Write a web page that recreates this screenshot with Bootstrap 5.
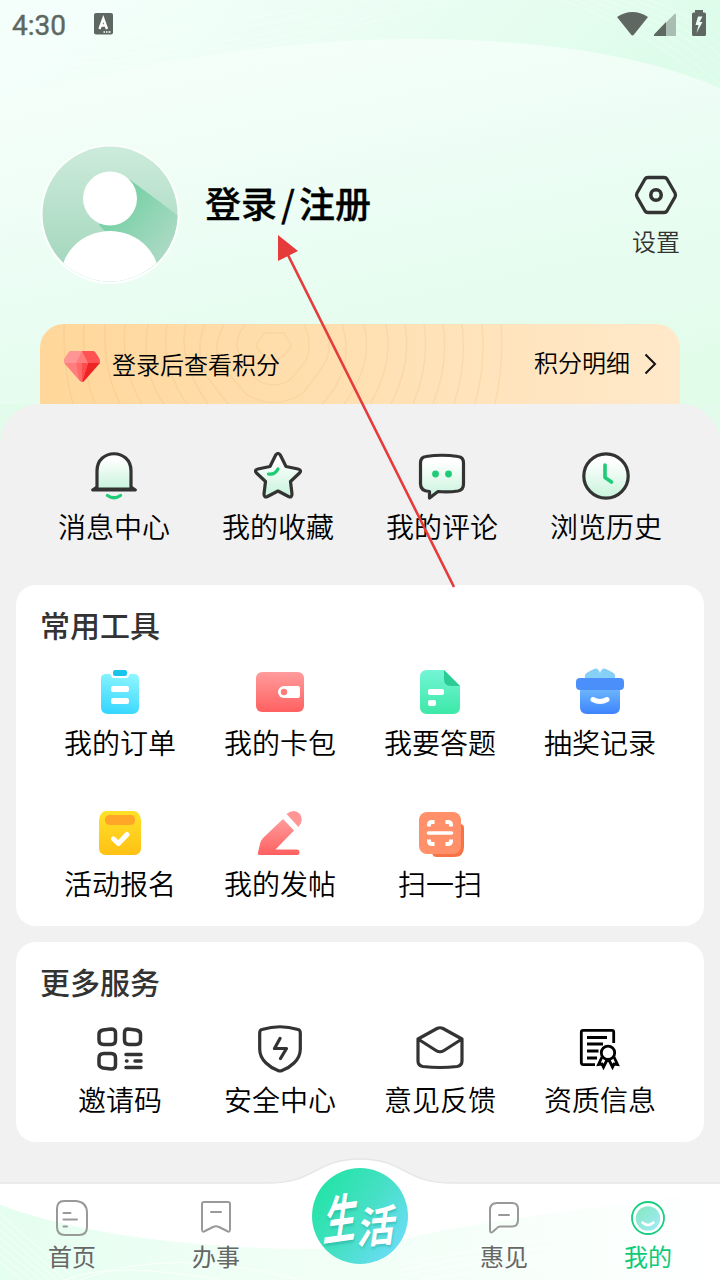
<!DOCTYPE html>
<html lang="zh-CN">
<head>
<meta charset="utf-8">
<meta name="viewport" content="width=device-width, initial-scale=1">
<title>我的</title>
<link href="https://cdn.jsdelivr.net/npm/bootstrap@5.3.0/dist/css/bootstrap.min.css" rel="stylesheet">
<style>
body{font-family:"Noto Sans CJK SC",sans-serif;font-weight:350;color:#000;background:#f1f1f1;overflow:hidden}
.screen{width:720px;height:1280px;overflow:hidden}
.screen svg{display:block;flex:none}
.hero{height:404px;background:#e2fbea}
.hero-art{left:0;top:0;z-index:0}
.status{height:48px;padding:0 12px;font-family:Roboto,sans-serif;font-weight:500;font-size:28px;color:#5e6762}
.status span{font-weight:400;-webkit-text-stroke:.4px #5e6762}
.profile{height:276px;padding:95px 36px 0 39px}
.login{font-size:36px;font-weight:500;line-height:54px;margin:32px 0 0 24px;-webkit-text-stroke:.3px #000}
.login i{font-style:normal;margin:0 4px}
.setting-link{padding-top:30px}
.setting{font-size:24px;line-height:34px;color:#333;margin-top:7px}
.points{height:80px;margin:0 40px;padding:0 20px 0 24px;border-radius:24px 24px 0 0;background:linear-gradient(90deg,#ffd79b,#ffe9ca);font-size:24px;overflow:hidden}
.points .hint{padding-bottom:1px}
.points .detail{padding-bottom:4px}
.rings{left:0;top:0}
.sheet{height:876px;border-radius:40px 40px 0 0;background:#f1f1f1;padding-top:48px}
.under{background:#e2fbea}
.tile{font-size:28px;line-height:42px;gap:5px;padding-bottom:1px}
.shortcuts{padding:0 32px;height:133px}
.panel{margin:0 16px 16px;padding:19px 24px 21px;border-radius:20px;background:#fff}
.panel h2{font-size:30px;font-weight:500;line-height:40px;color:#333;margin:0 0 24px}
.tiles{row-gap:45px}
.tabs{left:0;bottom:0;width:720px;height:124px}
.tabs-bg{left:0;top:0}
.tab{width:144px;font-size:24px;line-height:34px;font-weight:400;color:#666;padding-top:42px;gap:1px}
.tab.on{color:#0fc977}
.life{width:96px;height:96px;margin:12px 24px 0;border-radius:50%;background:linear-gradient(125deg,#20e4a4 8%,#45e0c4 50%,#72dcff 95%);color:#fff;font-weight:500;line-height:1;text-shadow:1px 2px 2px #1a9b9060}
.life b{font-size:38px;font-weight:700;display:block;transform:skew(-8deg,-8deg) scale(.86,1.4)}
.life b+b{font-size:38px;margin:16px 0 0 -3px;transform:skew(-8deg,-5deg) scale(.98,1.15)}
.pointer{left:0;top:0;pointer-events:none}
</style>
</head>
<body>
<div class="screen position-relative">
  <header class="hero position-relative">
    <svg class="hero-art position-absolute" width="720" height="404" viewBox="0 0 720 404">
      <defs>
        <linearGradient id="sky" x1="0" y1="0" x2="1" y2=".25"><stop offset=".1" stop-color="#f4fffb"/><stop offset=".55" stop-color="#eafdf3"/><stop offset="1" stop-color="#ddfce9"/></linearGradient>
        <linearGradient id="hill" x1=".25" y1="0" x2=".65" y2="1"><stop offset="0" stop-color="#f6fffa"/><stop offset=".5" stop-color="#ebfdf4"/><stop offset="1" stop-color="#e2fcea"/></linearGradient>
      </defs>
      <path d="M0 0H720V150H0Z" fill="url(#sky)"/>
      <g fill="none" stroke="#fff" stroke-opacity=".35" stroke-width="1"><path d="M560 0Q650 30 720 95M575 0Q660 30 720 85M590 0Q670 28 720 75M605 0Q680 27 720 65M620 0Q685 24 720 55M635 0Q690 20 720 45M650 0Q695 18 720 35M0 60Q200 60 400 0M0 68Q210 64 430 0M0 76Q230 68 450 0M0 50Q180 50 370 0M0 40Q180 38 340 0"/></g>
      <path d="M0 98Q250 37 420 39Q610 40 720 88V404H0Z" fill="url(#hill)"/>
    </svg>
    <div class="status position-relative d-flex align-items-center">
      <span class="pt-1">4:30</span>
      <svg class="ms-4" width="24" height="24" viewBox="90 12 24 24"><rect x="94" y="13" width="19" height="21.500" rx="2" fill="#5e6762"/><path d="M99.500 29L103.300 18.500L107 29M101 25.500H105.500" fill="none" stroke="#fff" stroke-width="2.400"/><path d="M103.500 32h1.500m1 0h1.500m1 0h2" stroke="#fff" stroke-width="1.600"/></svg>
      <svg class="ms-auto" width="96" height="32" viewBox="612 8 96 32" fill="#5e6762"><path d="M617 17Q632.500 7 648 17L634 34.500Q632.500 36.500 631 34.500Z"/><path d="M666 22V36H655Q653 36 654.500 34Z"/><path d="M666 22.500L674 14.500Q676 13 676 15V36H666Z" opacity=".42"/><path d="M693.500 12.500H695V10H703V12.500H704.500Q706 12.500 706 14V34.500Q706 36 704.500 36H693.500Q692 36 692 34.500V14Q692 12.500 693.500 12.500Z"/><path d="M698 16.500L695.500 25H698.500L696.500 33L702.500 22H699.500L702.500 16.500Z" fill="#ecfff4"/></svg>
    </div>
    <div class="profile position-relative d-flex align-items-start">
      <svg width="142" height="142" viewBox="39 143 142 142">
        <defs>
          <linearGradient id="av" x1="0" y1="0" x2="0" y2="1"><stop stop-color="#cfecdc"/><stop offset="1" stop-color="#9ed4b9"/></linearGradient>
          <linearGradient id="shade" gradientUnits="userSpaceOnUse" x1="125" y1="200" x2="172" y2="240"><stop stop-color="#79d1a7"/><stop offset="1" stop-color="#a9d9c2"/></linearGradient>
          <clipPath id="face"><circle cx="110" cy="214" r="67.500"/></clipPath>
        </defs>
        <circle cx="110" cy="214.500" r="69.500" fill="#fff" opacity=".85"/>
        <g clip-path="url(#face)"><path d="M40 140H180V285H40Z" fill="url(#av)"/><path d="M129 179L180 217V285H155L99 225Z" fill="url(#shade)"/><ellipse cx="110" cy="277" rx="49" ry="46" fill="#fff"/></g>
        <circle cx="110" cy="198.500" r="27" fill="#fff"/>
      </svg>
      <div class="login">登录<i>/</i>注册</div>
      <div class="setting-link ms-auto me-1 text-center">
        <svg class="mx-auto" width="44" height="44" viewBox="634 173 44 44" fill="none" stroke="#333"><path d="M648 177.500H664Q666 177.500 667 179L675 193Q676 195 675 197L667 211Q666 212.500 664 212.500H648Q646 212.500 645 211L637 197Q636 195 637 193L645 179Q646 177.500 648 177.500Z" stroke-width="3.300"/><circle cx="656" cy="195" r="5.200" stroke-width="3.600"/></svg>
        <div class="setting">设置</div>
      </div>
    </div>
    <div class="points position-relative d-flex align-items-center">
      <svg class="rings position-absolute" width="640" height="80" viewBox="40 324 640 80" fill="none" stroke="#d9a75e" stroke-opacity=".15" stroke-width="1.400"><path d="M264 333H284L291 345Q289 352 280 358Q274 363 266 357L257 348Q255 343 260 339Z"/><path d="M245 324Q232 342 240 356L256 379Q273 391 291 379L306 361Q313 343 304 324"/><path d="M224 324Q210 350 224 369L247 395Q274 411 303 393L324 365Q335 345 322 324M205 324Q194 350 207 377L228 404M322 404Q356 368 342 324M186 324Q177 360 208 404M344 404Q374 364 364 324M167 324Q160 365 187 404M370 404Q394 364 386 324M148 324Q140 370 164 404M391 404Q412 364 405 324M125 324Q121 370 142 404M413 404Q430 364 424 324M105 324Q103 370 120 404M433 404Q449 364 443 324M84 324Q81 370 95 404M454 404Q467 364 462 324M64 324Q63 370 73 404M475 404Q486 364 482 324M495 404Q504 364 501 324"/></svg>
      <svg class="position-relative mt-1" width="36" height="32" viewBox="64 350 36 32"><path d="M72 351H92Q94 351 95 352L99 358Q101 361 99 364L85 380Q82 383 79 380L65 364Q63 361 65 358L69 352Q70 351 72 351Z" fill="#ff7d7d"/><path d="M72 351H82L76 363H64Q64 359 66 357L69 352Q70 351 72 351Z" fill="#ff9595"/><path d="M82 351H92Q94 351 95 352L99 358Q100 360 100 363H88Z" fill="#ff5252"/><path d="M88 363H100L99 364L85 380Q84 382 82 382Z" fill="#ee2424"/><path d="M76 363H82V382Q80 382 79 379Z" fill="#ff6969"/><path d="M82 363H88L82 382Z" fill="#ff4b4b"/></svg>
      <span class="hint position-relative ms-2 ps-1">登录后查看积分</span>
      <span class="detail position-relative ms-auto">积分明细</span>
      <svg class="position-relative ms-2" width="22" height="24" viewBox="638 352 22 24"><path d="M645.500 354.500L655 364L645.500 373.500" fill="none" stroke="#111" stroke-width="2"/></svg>
    </div>
  </header>
  <div class="under"><main class="sheet">
    <nav class="shortcuts row row-cols-4 g-0">
      <div class="tile col d-flex flex-column align-items-center">
        <svg width="48" height="48" viewBox="90 452 48 48"><defs><linearGradient id="mint" x1="0" y1="0" x2="0" y2="1"><stop offset=".15" stop-color="#fff"/><stop offset="1" stop-color="#c7f3db"/></linearGradient></defs><path d="M97 489V471C97 448 131 448 131 471V489Z" fill="url(#mint)" stroke="#333" stroke-width="3.200"/><path d="M97 487L92.500 490H135.500L131 487" fill="none" stroke="#333" stroke-width="2.800" stroke-linejoin="round"/><path d="M107.500 495.500Q114 500 120.500 495.500" fill="none" stroke="#1ecb76" stroke-width="3.200" stroke-linecap="round"/></svg>
        <span>消息中心</span></div>
      <div class="tile col d-flex flex-column align-items-center">
        <svg width="48" height="48" viewBox="254 452 48 48"><path d="M275.700 455Q278 452 280.300 455L286 466.500L298 469Q302 470 299.500 473L290.500 481.500L292 494Q292 498 288.500 496.500L278 491L267.500 496.500Q264 498 264 494L265.500 481.500L256.500 473Q254 470 258 469L270 466.500Z" fill="url(#mint)" stroke="#333" stroke-width="3.200" stroke-linejoin="round"/><path d="M268.500 474Q275 475 278 469" fill="none" stroke="#1ecb76" stroke-width="3.200" stroke-linecap="round"/></svg>
        <span>我的收藏</span></div>
      <div class="tile col d-flex flex-column align-items-center">
        <svg width="48" height="48" viewBox="418 452 48 48"><path d="M426 456.500Q442 454 458 456.500Q463.500 457 463.500 463V484Q463.500 490 458 491Q448 492.500 438 491.500L429.500 498V491.500Q420.500 491 420.500 484V463Q420.500 457 426 456.500Z" fill="url(#mint)" stroke="#333" stroke-width="3.200" stroke-linejoin="round"/><g fill="#1ecb76"><circle cx="435.500" cy="474" r="3.400"/><circle cx="448.500" cy="474" r="3.400"/></g></svg>
        <span>我的评论</span></div>
      <div class="tile col d-flex flex-column align-items-center">
        <svg width="48" height="48" viewBox="582 452 48 48"><circle cx="606" cy="476" r="22.200" fill="url(#mint)" stroke="#333" stroke-width="3.200"/><path d="M605 465V477.500L611.500 482" fill="none" stroke="#1ecb76" stroke-width="3.600" stroke-linecap="round" stroke-linejoin="round"/></svg>
        <span>浏览历史</span></div>
    </nav>

    <section class="panel">
      <h2>常用工具</h2>
      <div class="tiles row row-cols-4 g-0">
        <div class="tile col d-flex flex-column align-items-center">
          <svg width="48" height="48" viewBox="96 668 48 48"><defs><linearGradient id="cy" x1=".6" y1="0" x2=".4" y2="1"><stop stop-color="#8cf5ff"/><stop offset="1" stop-color="#35d6ff"/></linearGradient></defs><path d="M106 674H109.500Q111 674 111 675.500Q111.500 678 114 678H126Q128.500 678 129 675.500Q129 674 130.500 674H134Q139 674 139 679V707Q139 714 132 714H108Q101 714 101 707V679Q101 674 106 674Z" fill="url(#cy)"/><rect x="113" y="670" width="14" height="6" rx="2" fill="#19c3ea"/><rect x="111" y="686" width="18" height="6" rx="2" fill="#fff"/><rect x="111" y="698" width="18" height="6" rx="2" fill="#fff"/></svg>
          <span>我的订单</span></div>
        <div class="tile col d-flex flex-column align-items-center">
          <svg width="48" height="48" viewBox="256 668 48 48"><defs><linearGradient id="rd" x1="0" y1="0" x2="0" y2="1"><stop stop-color="#ff9c9c"/><stop offset="1" stop-color="#ff6060"/></linearGradient></defs><rect x="256" y="672" width="48" height="40" rx="6" fill="url(#rd)"/><path d="M284 686H298Q300 686 300 688V696Q300 698 298 698H284A6 6 0 0 1 284 686Z" fill="#fff"/><circle cx="284" cy="692" r="3.200" fill="#ff7c7c"/></svg>
          <span>我的卡包</span></div>
        <div class="tile col d-flex flex-column align-items-center">
          <svg width="48" height="48" viewBox="416 668 48 48"><defs><linearGradient id="gn" x1="0" y1="0" x2="0" y2="1"><stop stop-color="#73f5d5"/><stop offset="1" stop-color="#3ce8a7"/></linearGradient></defs><path d="M427 670H444L460 686V707Q460 714 453 714H427Q420 714 420 707V677Q420 670 427 670Z" fill="url(#gn)"/><path d="M444 670L460 686H451Q444 686 444 679Z" fill="#2bcb94"/><rect x="428" y="689" width="16" height="6" rx="2" fill="#fff"/><rect x="428" y="700" width="8" height="6" rx="2" fill="#fff"/></svg>
          <span>我要答题</span></div>
        <div class="tile col d-flex flex-column align-items-center">
          <svg width="48" height="48" viewBox="576 668 48 48"><defs><linearGradient id="bl" x1="0" y1="0" x2="0" y2="1"><stop stop-color="#6eb8fc"/><stop offset="1" stop-color="#3d83fd"/></linearGradient></defs><path d="M585 678Q584 674 588 672L594 669Q598 667 600 673Q602 667 606 669L612 672Q616 674 615 678Z" fill="#86d0f7"/><path d="M580 688H620V707Q620 714 613 714H587Q580 714 580 707Z" fill="url(#bl)"/><rect x="576" y="678" width="48" height="12" rx="4" fill="#4b8ffb"/><path d="M593 699.500Q600 703.500 607 699.500" fill="none" stroke="#fff" stroke-width="5" stroke-linecap="round"/></svg>
          <span>抽奖记录</span></div>
        <div class="tile col d-flex flex-column align-items-center">
          <svg width="48" height="48" viewBox="96 809 48 48"><defs><linearGradient id="yl" x1="0" y1="0" x2="0" y2="1"><stop stop-color="#ffe128"/><stop offset="1" stop-color="#ffc114"/></linearGradient></defs><path d="M107 811H133Q138 811 140 816L141 820V848Q141 855 134 855H106Q99 855 99 848V820L100 816Q102 811 107 811Z" fill="url(#yl)"/><rect x="105" y="815" width="30" height="10" rx="4.500" fill="#ffa528"/><path d="M113.500 839L118.500 843.500L127 834.500" fill="none" stroke="#fff" stroke-width="5" stroke-linecap="round" stroke-linejoin="round"/></svg>
          <span>活动报名</span></div>
        <div class="tile col d-flex flex-column align-items-center">
          <svg width="48" height="48" viewBox="256 809 48 48" fill="url(#rd)"><path d="M283 819L294 830.500L275.500 849.500H296.500Q299.500 849.500 299.500 852.500T296.500 855H259.500Q257.500 855 258 852.500L260 844Q261 840 263 838Z"/><path d="M286.500 814Q294 808 300 814Q304 821 298.500 827Z" fill="#ff9595"/></svg>
          <span>我的发帖</span></div>
        <div class="tile col d-flex flex-column align-items-center">
          <svg width="48" height="48" viewBox="416 809 48 48"><path d="M430 824H460Q464 824 464 828V847Q464 857 454 857H437Q432 857 432 852Z" fill="#f77345"/><rect x="419" y="812" width="42" height="42" rx="8" fill="#ff9069"/><g fill="none" stroke="#fff" stroke-width="4"><path d="M429 826.500V825Q429 822 432 822H434.500M445.500 822H448Q451 822 451 825V826.500M429 839.500V841Q429 844 432 844H434.500M445.500 844H448Q451 844 451 841V839.500"/><path d="M428.500 833H451.500" stroke-linecap="round" stroke-width="3.600"/></g></svg>
          <span>扫一扫</span></div>
      </div>
    </section>

    <section class="panel">
      <h2>更多服务</h2>
      <div class="tiles row row-cols-4 g-0">
        <div class="tile col d-flex flex-column align-items-center">
          <svg width="48" height="48" viewBox="96 1025 48 48" fill="none" stroke="#333" stroke-width="3.500" stroke-linecap="round" stroke-linejoin="round"><path d="M103 1030L111 1029Q115.500 1029 115.500 1033V1040Q115.500 1044.500 111 1044.500H104Q99 1044.500 99 1040V1034Q99 1031 103 1030ZM128 1029L136 1030Q140.500 1031 140.500 1034V1040Q140.500 1044.500 136 1044.500H129Q124.500 1044.500 124.500 1040V1033Q124.500 1029 128 1029ZM104 1053.500H111Q115.500 1053.500 115.500 1058V1065Q115.500 1069 111 1069L103 1068Q99 1067 99 1064V1058Q99 1053.500 104 1053.500ZM126 1054.500H141M126.500 1061H127M135 1061H141M126 1067.500H141"/></svg>
          <span>邀请码</span></div>
        <div class="tile col d-flex flex-column align-items-center">
          <svg width="48" height="48" viewBox="256 1025 48 48" fill="none" stroke="#333" stroke-width="3.200" stroke-linecap="round" stroke-linejoin="round"><path d="M262 1029.500Q280 1024 298 1029.500Q300.300 1030 300.300 1033V1049Q300.300 1057 294 1063Q289 1068 282 1070.500Q280 1071.500 278 1070.500Q271 1068 266 1063Q259.700 1057 259.700 1049V1033Q259.700 1030 262 1029.500ZM280 1038.500L274.500 1048.500H286.500L280.500 1058.500"/></svg>
          <span>安全中心</span></div>
        <div class="tile col d-flex flex-column align-items-center">
          <svg width="48" height="48" viewBox="416 1025 48 48" fill="none" stroke="#333" stroke-width="3.200" stroke-linejoin="round"><path d="M418 1039L437 1028.500Q440 1027 443 1028.500L462 1039V1061Q462 1065.500 457 1066.500Q440 1068.500 423 1066.500Q418 1065.500 418 1061ZM418 1039L436 1050.500Q440 1053 444 1050.500L462 1039"/></svg>
          <span>意见反馈</span></div>
        <div class="tile col d-flex flex-column align-items-center">
          <svg width="48" height="48" viewBox="576 1025 48 48" fill="none" stroke="#000" stroke-width="2.800"><path d="M613.700 1043V1032Q613.700 1030.300 612 1030.300H583.300Q581.300 1030.300 581.300 1032V1062Q581.300 1064.700 583.300 1064.700H595M587 1037.500H607M587 1044H603M587 1051H598.500M587 1058H597"/><circle cx="608" cy="1052.800" r="6.700"/><path d="M602 1057L598.500 1064.500L602 1064L603.500 1067L607 1060M614 1057L617.500 1064.500L614 1064L612.500 1067L609 1060"/></svg>
          <span>资质信息</span></div>
      </div>
    </section>
  </main></div>

  <nav class="tabs position-absolute d-flex">
    <svg class="tabs-bg position-absolute" width="720" height="124" viewBox="0 1156 720 124">
      <defs><linearGradient id="w1"><stop stop-color="#e4feef"/><stop offset="1" stop-color="#f1fff7" stop-opacity="0"/></linearGradient><linearGradient id="w2"><stop stop-color="#edfef4"/><stop offset=".5" stop-color="#f1fff7"/><stop offset="1" stop-color="#fff"/></linearGradient><clipPath id="bar"><path d="M-4 1183H268C316 1183 316 1159 360 1159S404 1183 452 1183H724V1284H-4Z"/></clipPath></defs>
      <g clip-path="url(#bar)"><path d="M0 1156H720V1280H0Z" fill="#fff"/><path d="M0 1205Q80 1235 210 1245T400 1240T590 1208T720 1190V1280H0Z" fill="url(#w2)"/><path d="M0 1205Q80 1235 210 1245T330 1246V1280H0Z" fill="url(#w1)"/>
      <g fill="none" stroke="#fff" stroke-opacity=".75"><path d="M0 1222L65 1280M0 1230L57 1280M0 1238L49 1280M0 1246L41 1280M0 1254L32 1280M0 1262L22 1280M0 1214L76 1280M65 1280Q110 1260 220 1280M80 1280Q170 1245 300 1280M400 1265Q530 1235 720 1225M400 1270Q540 1242 720 1233M400 1275Q550 1249 720 1241M420 1280Q570 1256 720 1249"/></g></g>
      <path d="M-4 1183H268C316 1183 316 1159 360 1159S404 1183 452 1183H724" fill="none" stroke="#e6e6e6" stroke-width="1.500"/>
    </svg>
    <div class="tab position-relative d-flex flex-column align-items-center">
      <svg width="40" height="40" viewBox="52 1198 40 40" fill="none" stroke="#999" stroke-width="2" stroke-linecap="round"><path d="M64 1201H76Q87 1202 87 1213V1227Q87 1235 79 1235H65Q57 1235 57 1227V1209Q57 1201 64 1201ZM63.500 1213H70.500M63.500 1219.500H77M63.500 1226.500H67"/></svg><span>首页</span></div>
    <div class="tab position-relative d-flex flex-column align-items-center">
      <svg width="40" height="40" viewBox="196 1198 40 40" fill="none" stroke="#999" stroke-width="2" stroke-linecap="round" stroke-linejoin="round"><path d="M204 1202H228Q230 1202 230 1204V1229Q230 1233 227 1231L219 1227Q216 1225.500 213 1227L205 1231Q202 1233 202 1229V1204Q202 1202 204 1202ZM211 1212H221"/></svg><span>办事</span></div>
    <div class="life position-relative d-flex align-items-center justify-content-center"><b>生</b><b>活</b></div>
    <div class="tab position-relative d-flex flex-column align-items-center">
      <svg width="40" height="40" viewBox="484 1198 40 40" fill="none" stroke="#999" stroke-width="2" stroke-linecap="round" stroke-linejoin="round"><path d="M497 1203H512Q518 1203 518 1209V1220Q518 1226.500 512 1226.500H500Q498 1226.500 496 1229L492.500 1232Q490 1233.500 490 1230V1210Q490 1203 497 1203ZM499 1215H509"/></svg><span>惠见</span></div>
    <div class="tab on position-relative d-flex flex-column align-items-center">
      <svg width="40" height="40" viewBox="628 1198 40 40"><defs><linearGradient id="me" x1="0" y1="0" x2="1" y2="1"><stop stop-color="#83e8bd"/><stop offset="1" stop-color="#a3eafc"/></linearGradient></defs><circle cx="648" cy="1218" r="16" fill="#fff" stroke="#17ce83" stroke-width="1.800"/><circle cx="648" cy="1218.500" r="12.200" fill="url(#me)"/><path d="M642.500 1222.500Q648 1227.500 653.500 1222.500" fill="none" stroke="#fff" stroke-width="2.400" stroke-linecap="round"/></svg><span>我的</span></div>
  </nav>

  <svg class="pointer position-absolute" width="720" height="620" viewBox="0 0 720 620"><path d="M454 587L288 255" stroke="#e53b3b" stroke-width="2.600"/><path d="M278 235L298 251L278 261Z" fill="#e53b3b"/></svg>
</div>
<script src="https://cdn.jsdelivr.net/npm/bootstrap@5.3.0/dist/js/bootstrap.bundle.min.js"></script>
</body>
</html>
